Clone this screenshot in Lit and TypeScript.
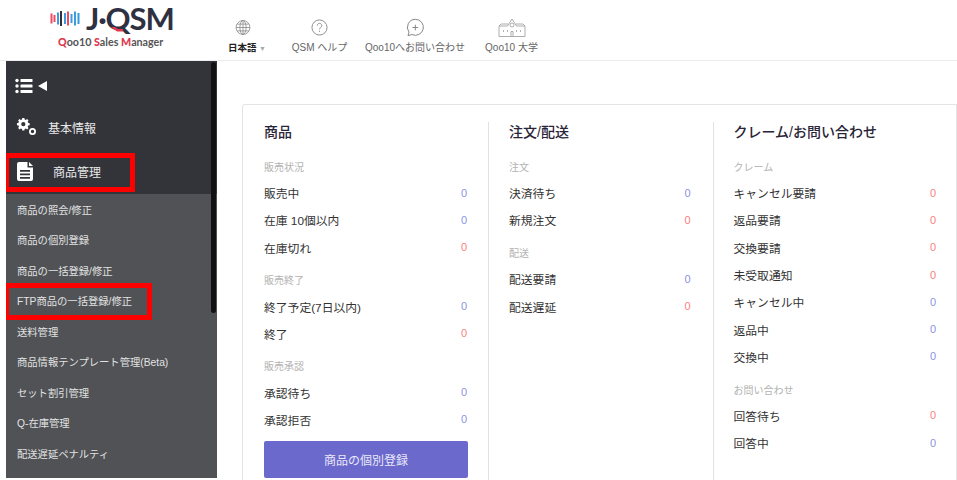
import { LitElement, html, css, svg } from "lit";
import { customElement } from "lit/decorators.js";

type Row = [string, number, "b" | "r"];
type Group = { label: string; rows: Row[] };
type Col = { title: string; groups: Group[]; button?: string };

const cols: Col[] = [
  {
    title: "商品",
    button: "商品の個別登録",
    groups: [
      { label: "販売状況", rows: [["販売中", 0, "b"], ["在庫 10個以内", 0, "b"], ["在庫切れ", 0, "r"]] },
      { label: "販売終了", rows: [["終了予定(7日以内)", 0, "b"], ["終了", 0, "r"]] },
      { label: "販売承認", rows: [["承認待ち", 0, "b"], ["承認拒否", 0, "b"]] },
    ],
  },
  {
    title: "注文/配送",
    groups: [
      { label: "注文", rows: [["決済待ち", 0, "b"], ["新規注文", 0, "r"]] },
      { label: "配送", rows: [["配送要請", 0, "b"], ["配送遅延", 0, "r"]] },
    ],
  },
  {
    title: "クレーム/お問い合わせ",
    groups: [
      {
        label: "クレーム",
        rows: [["キャンセル要請", 0, "r"], ["返品要請", 0, "r"], ["交換要請", 0, "r"], ["未受取通知", 0, "r"], ["キャンセル中", 0, "b"], ["返品中", 0, "b"], ["交換中", 0, "b"]],
      },
      { label: "お問い合わせ", rows: [["回答待ち", 0, "r"], ["回答中", 0, "b"]] },
    ],
  },
];

const subs = ["商品の照会/修正", "商品の個別登録", "商品の一括登録/修正", "FTP商品の一括登録/修正", "送料管理", "商品情報テンプレート管理(Beta)", "セット割引管理", "Q-在庫管理", "配送遅延ペナルティ"];

const bars: [number, number, string][] = [
  [50.5, 10, "#ef4a5f"], [53.5, 7, "#ef4a5f"], [57, 12, "#3f9be0"], [60, 15, "#2f3142"], [64, 11, "#3f9be0"], [67, 14, "#ef4a5f"], [70.5, 9, "#3f9be0"], [74, 14, "#3f9be0"], [77.5, 11, "#2f9be0"],
];

@customElement("app-root")
export class AppRoot extends LitElement {
  static styles = css`
    :host { display: block; width: 957px; height: 480px; overflow: hidden; background: #fff; font-family: "Liberation Sans", "Noto Sans CJK JP", sans-serif; color: #333; }
    .header { height: 61px; box-sizing: border-box; border-bottom: 1px solid #ececec; display: flex; }
    .logo { width: 217px; flex: none; display: flex; flex-direction: column; align-items: flex-start; padding: 3px 0 0 50px; box-sizing: border-box; }
    .logo-top { display: flex; align-items: center; gap: 6px; height: 31px; }
    .logo-top svg { display: block; }
    .logo-word { font: 700 31px/31px Lato, sans-serif; color: #2f3142; letter-spacing: -1.1px; position: relative; }
    .tail { position: absolute; left: 25px; top: 24px; }
    .logo-sub { font: 700 10.7px/12px Lato, sans-serif; color: #555; margin: 2px 0 0 8px; white-space: nowrap; }
    .logo-sub b { color: #e0384f; }
    .tools { display: flex; align-items: flex-start; padding: 18px 0 0 11px; }
    .tool { display: flex; flex-direction: column; align-items: center; font-size: 10px; color: #666; white-space: nowrap; }
    .tool svg { display: block; height: 19px; margin-bottom: 3px; }
    .tool span { line-height: 15px; }
    .t0 { width: 38px; }
    .t0 svg { margin-right: 8px; }
    .t0 span { color: #222; font-weight: 700; font-size: 9.5px; }
    .t0 i { font-style: normal; color: #aaa; font-weight: 400; font-size: 7px; }
    .t1 { margin-left: 23.5px; width: 60px; }
    .t2 { margin-left: 13.5px; width: 104px; }
    .t3 { margin-left: 16.5px; width: 56px; }
    .body { display: flex; height: 419px; }
    .side { width: 211px; margin-left: 6px; flex: none; height: 417px; background: #505256; position: relative; overflow: hidden; }
    .side-top { background: #33343a; height: 133px; display: flex; flex-direction: column; }
    .toggle { height: 50px; display: flex; align-items: center; padding: 0 0 0 9px; gap: 5px; }
    .main-item { display: flex; align-items: center; color: #e8e8e8; font-size: 12px; }
    .m1 { height: 32px; padding-left: 10px; gap: 11px; }
    .m2 { height: 44px; margin-top: 6px; padding-left: 11px; gap: 19px; }
    .subs { display: flex; flex-direction: column; }
    .sub { height: 30.5px; display: flex; align-items: center; padding-left: 11px; color: #e2e2e2; font-size: 10.3px; white-space: nowrap; }
    .scroll { position: absolute; right: 1px; top: 1px; width: 5px; height: 251px; background: #111; border-radius: 3px; }
    .mark { position: absolute; border: 5px solid #fe0000; box-sizing: border-box; left: -2px; }
    .mark.a { top: 92px; width: 131px; height: 39px; }
    .mark.b { top: 222px; width: 148px; height: 37px; }
    .content { flex: 1; padding: 43px 0 0 25px; min-width: 0; }
    .card { height: 376px; box-sizing: border-box; width: 715px; border: 1px solid #e4e4e4; border-bottom: 0; border-radius: 3px 0 0 0; display: grid; grid-template-columns: 245px 224.5px 1fr; padding-top: 17px; }
    .col { padding: 0 0 0 20px; border-left: 1px solid #e2e2e2; height: 358px; box-sizing: border-box; }
    .col:first-child { border-left: 0; padding-left: 21px; }
    .col:first-child .row { margin-right: 21px; }
    .col:first-child .btn { margin-right: 20px; }
    .col:nth-child(2) { padding-right: 22px; }
    .col:nth-child(3) { padding-right: 20px; }
    .title { font-size: 14px; font-weight: 500; line-height: 20px; color: #2a2438; margin-bottom: 19px; white-space: nowrap; }
    .group { margin-bottom: 13.5px; }
    .label { font-size: 10px; line-height: 14px; color: #b2b2b2; margin-bottom: 4px; }
    .row { height: 27.3px; display: flex; justify-content: space-between; align-items: center; font-size: 11.8px; color: #333; }
    .v { font-size: 11px; }
    .v.b { color: #8c93e0; }
    .v.r { color: #fa8080; }
    .btn { background: #6b69cc; color: #e8e8f8; height: 37px; border-radius: 2px; display: flex; align-items: center; justify-content: center; font-size: 12px; margin-top: -5.5px; }
  `;

  private col(c: Col) {
    return html`<div class="col">
      <div class="title">${c.title}</div>
      ${c.groups.map(
        (g) => html`<div class="group">
          <div class="label">${g.label}</div>
          ${g.rows.map((r) => html`<div class="row"><span>${r[0]}</span><span class="v ${r[2]}">${r[1]}</span></div>`)}
        </div>`
      )}
      ${c.button ? html`<div class="btn">${c.button}</div>` : ""}
    </div>`;
  }

  render() {
    return html`
      <div class="header">
        <div class="logo">
          <div class="logo-top">
            <svg width="30" height="17" viewBox="50 2 30 17">
              ${bars.map(([x, h, c]) => svg`<rect x=${x} y=${10.5 - h / 2} width="2" height=${h} fill=${c}></rect>`)}
            </svg>
            <span class="logo-word">J·QSM<svg class="tail" width="12" height="5" viewBox="0 0 12 5"><path d="M0 0h4l3 2 5 0v2.5H6z" fill="#e0384f"/></svg></span>
          </div>
          <div class="logo-sub"><b>Q</b>oo10 <b>S</b>ales <b>M</b>anager</div>
        </div>
        <div class="tools">
          <div class="tool t0">
            <svg width="16" height="19" viewBox="0 0 18 18" fill="none" stroke="#888" stroke-width=".9"><circle cx="9" cy="9" r="7.8"/><ellipse cx="9" cy="9" rx="3.5" ry="7.8"/><path d="M9 1.2v15.6M1.2 9h15.6M2.5 5.2h13M2.5 12.8h13"/></svg>
            <span>日本語 <i>▼</i></span>
          </div>
          <div class="tool t1">
            <svg width="17" height="19" viewBox="0 0 18 18" fill="none" stroke="#888" stroke-width="1"><circle cx="9" cy="9" r="8"/><path d="M6.6 7a2.4 2.4 0 1 1 3.6 2.1C9.4 9.6 9 10 9 11"/><path d="M9 12.4v1.2"/></svg>
            <span>QSM ヘルプ</span>
          </div>
          <div class="tool t2">
            <svg width="18" height="19" viewBox="0 0 18 18" fill="none" stroke="#888" stroke-width="1"><path d="M9.3 .8a8 8 0 1 1-3.4 15.2L2 17.2l1-3.6A8 8 0 0 1 9.3 .8z"/><path d="M9.3 6.2v5.6M6.5 9h5.6"/></svg>
            <span>Qoo10へお問い合わせ</span>
          </div>
          <div class="tool t3">
            <svg width="28" height="19" viewBox="0 0 28 19" fill="none" stroke="#999" stroke-width=".8"><path d="M1 18.5V8h8.5L14 1l4.5 7H27v10.5zM1 8l2-2h7M27 8l-2-2h-7"/><circle cx="14" cy="7" r="2"/><path d="M13 18.5v-5h2v5"/><path d="M5 13h1M9 13h1M18 13h1M22 13h1" stroke-width="1.4"/></svg>
            <span>Qoo10 大学</span>
          </div>
        </div>
      </div>
      <div class="body">
        <div class="side">
          <div class="side-top">
            <div class="toggle">
              <svg width="18" height="16" viewBox="0 0 18 16" fill="#fff"><circle cx="2" cy="2.5" r="1.7"/><circle cx="2" cy="8" r="1.7"/><circle cx="2" cy="13.5" r="1.7"/><rect x="5.5" y="1" width="12" height="3" rx=".5"/><rect x="5.5" y="6.5" width="12" height="3" rx=".5"/><rect x="5.5" y="12" width="12" height="3" rx=".5"/></svg>
              <svg width="9" height="10" viewBox="0 0 9 10" fill="#fff"><path d="M9 0v10L0 5z"/></svg>
            </div>
            <div class="main-item m1">
              <svg width="21" height="18" viewBox="0 0 21 18" fill="#fff"><path d="M8 1h2.4l.4 1.8 1.3.6 1.6-1 1.6 1.6-1 1.6.6 1.3 1.8.4v2.4l-1.8.4-.6 1.3 1 1.6-1.6 1.6-1.6-1-1.3.6-.4 1.8H8l-.4-1.8-1.3-.6-1.6 1-1.6-1.6 1-1.6-.6-1.3-1.8-.4V7.3l1.8-.4.6-1.3-1-1.6 1.6-1.6 1.6 1 1.3-.6zM9.2 6a2.5 2.5 0 1 0 0 5 2.5 2.5 0 0 0 0-5z" transform="translate(-.5 -1) scale(.85)"/><circle cx="16.5" cy="13.5" r="2.6" fill="none" stroke="#fff" stroke-width="1.8"/></svg>
              <span>基本情報</span>
            </div>
            <div class="main-item m2">
              <svg width="17" height="19" viewBox="0 0 17 19" fill="#fff"><path d="M2 0h8.5v5.5H16V17a2 2 0 0 1-2 2H2a2 2 0 0 1-2-2V2a2 2 0 0 1 2-2zm10 0 4 4h-4zM3 8v1.8h10V8zm0 3.5v1.8h10v-1.8zM3 15v1.8h10V15z"/></svg>
              <span>商品管理</span>
            </div>
          </div>
          <div class="subs">${subs.map((s) => html`<div class="sub">${s}</div>`)}</div>
          <div class="scroll"></div>
          <div class="mark a"></div>
          <div class="mark b"></div>
        </div>
        <div class="content">
          <div class="card">${cols.map((c) => this.col(c))}</div>
        </div>
      </div>
    `;
  }
}
